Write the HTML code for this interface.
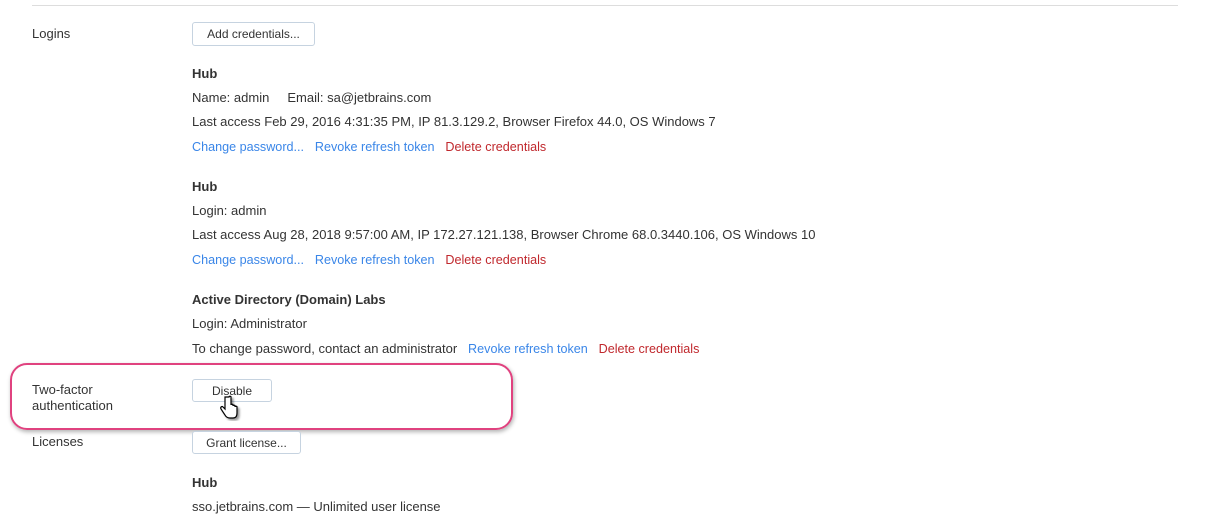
<!DOCTYPE html>
<html><head><style>
body{margin:0;width:1207px;height:524px;background:#fff;font-family:"Liberation Sans",Arial,sans-serif;font-size:13px;color:#333;position:relative;overflow:hidden}
.t{position:absolute;white-space:nowrap;line-height:16px}
.b{font-weight:bold}
.l{color:#3a86e8;font-size:12.6px}
.r{color:#c0282d;font-size:12.6px}
.btn{position:absolute;border:1px solid #c6d3e0;border-radius:3px;background:#fff;font-size:12px;text-align:center;line-height:23px;color:#333;box-sizing:border-box}
</style></head><body>
<div style="position:absolute;left:32px;top:5px;width:1146px;height:1px;background:#ddd"></div>
<div class="t" style="left:32px;top:26px">Logins</div>
<div class="btn" style="left:192px;top:22px;width:123px;height:24px">Add credentials...</div>
<div class="t b" style="left:192px;top:66px">Hub</div>
<div class="t" style="left:192px;top:90px">Name: admin&nbsp;&nbsp;&nbsp;&nbsp; Email: sa@jetbrains.com</div>
<div class="t" style="left:192px;top:114px">Last access Feb 29, 2016 4:31:35 PM, IP 81.3.129.2, Browser Firefox 44.0, OS Windows 7</div>
<div class="t" style="left:192px;top:139px"><span class="l">Change password...</span>&nbsp;&nbsp; <span class="l">Revoke refresh token</span>&nbsp;&nbsp; <span class="r">Delete credentials</span></div>
<div class="t b" style="left:192px;top:179px">Hub</div>
<div class="t" style="left:192px;top:203px">Login: admin</div>
<div class="t" style="left:192px;top:227px">Last access Aug 28, 2018 9:57:00 AM, IP 172.27.121.138, Browser Chrome 68.0.3440.106, OS Windows 10</div>
<div class="t" style="left:192px;top:252px"><span class="l">Change password...</span>&nbsp;&nbsp; <span class="l">Revoke refresh token</span>&nbsp;&nbsp; <span class="r">Delete credentials</span></div>
<div class="t b" style="left:192px;top:292px">Active Directory (Domain) Labs</div>
<div class="t" style="left:192px;top:316px">Login: Administrator</div>
<div class="t" style="left:192px;top:341px">To change password, contact an administrator&nbsp;&nbsp; <span class="l">Revoke refresh token</span>&nbsp;&nbsp; <span class="r">Delete credentials</span></div>
<div style="position:absolute;left:10px;top:363px;width:503px;height:67px;border:2px solid #e0427f;border-radius:17px;box-sizing:border-box;box-shadow:1px 2px 4px rgba(0,0,0,.3)"></div>
<div class="t" style="left:32px;top:382px">Two-factor</div>
<div class="t" style="left:32px;top:398px">authentication</div>
<div class="btn" style="left:192px;top:379px;width:80px;height:23px">Disable</div>
<svg style="position:absolute;left:219px;top:395px" width="24" height="26" viewBox="0 0 24 26"><path d="M6 2v12l-2-2c-1-1-3 0-2 2l4 6c1 2 3 3 5 3h3c3 0 4-2 4-5v-6c0-1-2-1-2 0v-1c0-1-2-1-2 0v-1c0-1-2-1-2 0V2c0-1-2-1-2 0z" fill="#fff" stroke="#000" stroke-width="1.2" filter="drop-shadow(2px 2px 1px rgba(0,0,0,.4))"/></svg>
<div class="t" style="left:32px;top:434px">Licenses</div>
<div class="btn" style="left:192px;top:431px;width:109px;height:23px">Grant license...</div>
<div class="t b" style="left:192px;top:475px">Hub</div>
<div class="t" style="left:192px;top:499px">sso.jetbrains.com — Unlimited user license</div>
</body></html>
